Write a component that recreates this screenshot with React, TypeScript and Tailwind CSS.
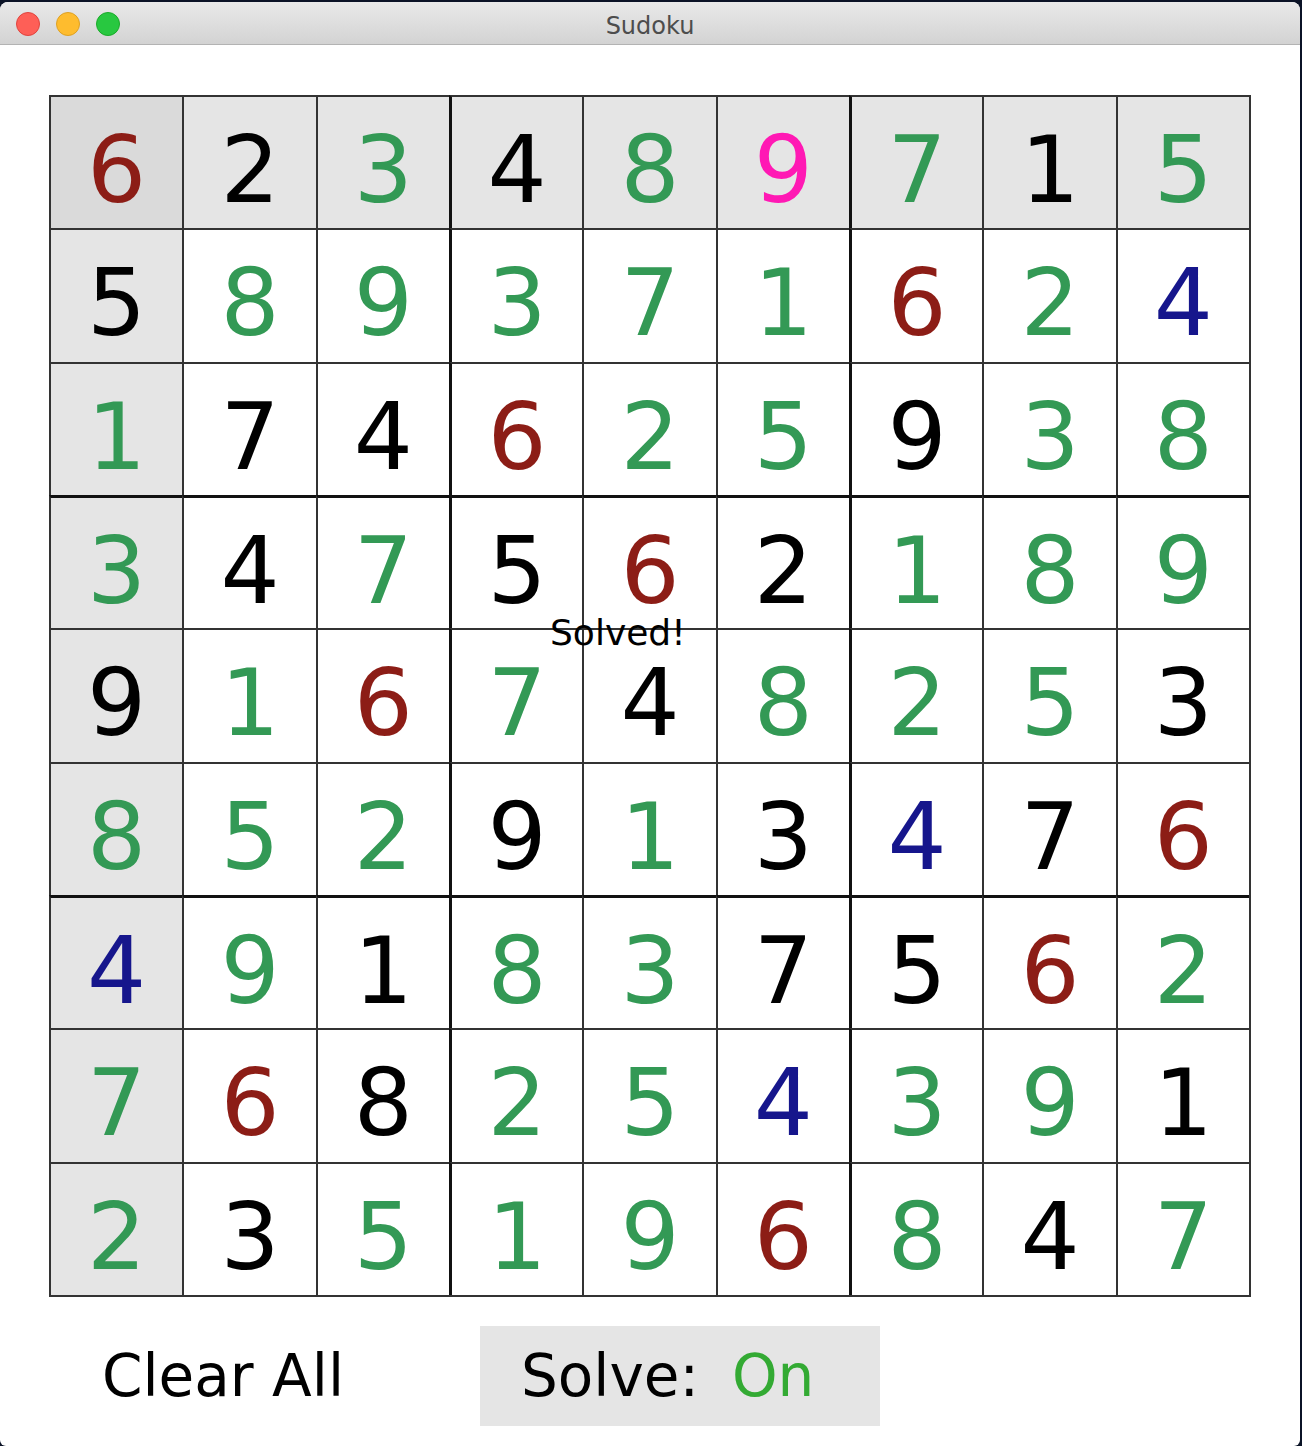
import React from "react";

const rows = [
  "623489715",
  "589371624",
  "174625938",
  "347562189",
  "916748253",
  "852913476",
  "491837562",
  "768254391",
  "235196847",
];

// k black, g green, r red, b blue, m magenta
const colours = [
  "rkgkgmgkg",
  "kgggggrgb",
  "gkkrggkgg",
  "gkgkrkggg",
  "kgrgkgggk",
  "gggkgkbkr",
  "bgkggkkrg",
  "grkggbggk",
  "gkgggrgkg",
];

const ink: Record<string, string> = {
  k: "text-black",
  g: "text-[#339955]",
  r: "text-[#8c1d16]",
  b: "text-[#16168c]",
  m: "text-[#ff19b4]",
};

function Cell({ r, c }: { r: number; c: number }) {
  const left =
    c % 3 === 0 && c !== 0
      ? "border-l-[3px] border-l-[#111111]"
      : "border-l-2 border-l-[#333333]";
  const top =
    r % 3 === 0 && r !== 0
      ? "border-t-[3px] border-t-[#111111]"
      : "border-t-2 border-t-[#333333]";
  const bg = r === 0 && c === 0 ? "bg-[#dadada]" : r === 0 || c === 0 ? "bg-[#e5e5e5]" : "bg-white";
  return (
    <div className={`${left} ${top} ${bg} text-center pt-[27px] leading-none text-[93px] ${ink[colours[r][c]]}`}>
      {rows[r][c]}
    </div>
  );
}

export default function App() {
  return (
    <div className="w-[1302px] h-[1446px] bg-[#0b1326] pt-[2px] pr-[2px] overflow-hidden" style={{ fontFamily: "'DejaVu Sans', sans-serif" }}>
      <div className="w-[1300px] h-[1444px] bg-white rounded-t-[8px] rounded-b-[6px] overflow-hidden flex flex-col">
        {/* title bar */}
        <div className="relative h-[43px] bg-gradient-to-b from-[#e9e9e9] to-[#d3d3d3] border-b border-[#b3b3b3] flex items-center justify-center shrink-0">
          <div className="absolute left-[16px] top-[10px] flex gap-[16px]">
            <span className="w-[24px] h-[24px] rounded-full bg-[#fe5f57] border border-[#e0443e]" />
            <span className="w-[24px] h-[24px] rounded-full bg-[#febc2e] border border-[#dea123]" />
            <span className="w-[24px] h-[24px] rounded-full bg-[#28c840] border border-[#1aab29]" />
          </div>
          <span className="pt-[5px] text-[24px] text-[#4d4d4d]">Sudoku</span>
        </div>

        {/* board */}
        <div className="relative ml-[49px] mt-[50px] w-[1202px] h-[1202px] grid grid-cols-[repeat(9,1fr)] grid-rows-[repeat(9,1fr)] border-r-2 border-b-2 border-[#333333]">
          {rows.map((row, r) => row.split("").map((_, c) => <Cell key={`${r}-${c}`} r={r} c={c} />))}
          <span className="absolute left-[501px] top-[511px] text-[36px] text-black">Solved!</span>
        </div>

        {/* controls */}
        <div className="flex items-center mt-[29px] ml-[49px] h-[100px]">
          <button className="w-[431px] h-[100px] text-left pl-[53px] text-[58px] text-black">Clear All</button>
          <div className="w-[400px] h-[100px] bg-[#e5e5e5] flex items-center pl-[41px] text-[58px]">
            <span className="text-black">Solve:</span>
            <span className="ml-[33px] text-[#33aa33]">On</span>
          </div>
        </div>
      </div>
    </div>
  );
}
